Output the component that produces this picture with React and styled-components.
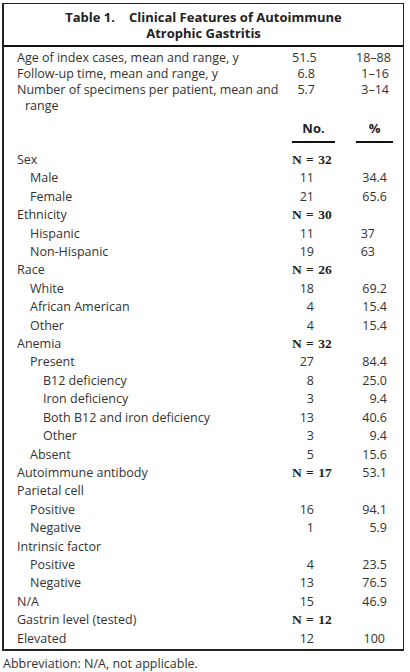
import React from "react";
import styled, { createGlobalStyle } from "styled-components";

const Global = createGlobalStyle`
  html, body { margin: 0; padding: 0; background: #fff; }
  body { font-family: "Open Sans", "Lato", sans-serif; color: #333; }
`;

const Page = styled.div`
  width: 410px;
  padding: 3px 0 0 2px;
  box-sizing: border-box;
`;

const Box = styled.div`
  width: 402px;
  box-sizing: border-box;
  border-top: 1px solid #222;
  border-right: 1px solid #222;
  border-left: 2px solid #222;
  border-bottom: 2px solid #222;
`;

const Title = styled.div`
  font-weight: 700;
  font-size: 13px;
  line-height: 16px;
  text-align: center;
  padding: 5px 0 4px;
  border-bottom: 2px solid #111;
  color: #222;
`;

const Gap = styled.span`
  display: inline-block;
  width: ${(p) => p.w}px;
`;

const Body = styled.div`
  padding: 3px 0 1px;
`;

const Row = styled.div`
  display: grid;
  grid-template-columns: 1fr 43px 21px 37px;
  padding: 0 10px 0 13px;
  font-size: 12.5px;
  line-height: ${(p) => (p.tight ? "16px" : "18.4px")};
`;

const Label = styled.div`
  padding-left: ${(p) => (p.level || 0) * 13}px;
  white-space: nowrap;
  min-width: 0;
`;

const Cont = styled.span`
  display: block;
  padding-left: 8px;
`;

const Num = styled.div`
  grid-column: 2;
  text-align: right;
  padding-right: ${(p) => (p.pr != null ? p.pr : 21)}px;
  white-space: nowrap;
`;

const Pct = styled.div`
  grid-column: 4;
  text-align: right;
  padding-right: ${(p) => (p.pr != null ? p.pr : 6)}px;
  white-space: nowrap;
`;

const NTotal = styled.div`
  grid-column: 2;
  font-family: "Liberation Serif", "Times New Roman", serif;
  font-weight: 700;
  font-size: 13.5px;
  word-spacing: 1px;
  white-space: nowrap;
  color: #222;
`;

const HeadCell = styled.div`
  grid-column: ${(p) => p.col};
  text-align: center;
  font-weight: 700;
  font-size: 13px;
  border-bottom: 2px solid #111;
  padding: 4px 0 5px;
  line-height: 16px;
  color: #222;
`;

const HeadRow = styled(Row)`
  margin-top: 2px;
  margin-bottom: 8px;
`;

const Foot = styled.div`
  font-size: 12.5px;
  line-height: 14px;
  padding: 6px 0 0 1px;
`;

const top = [
  { l: "Age of index cases, mean and range, y", a: "51.5", b: "18–88" },
  { l: "Follow-up time, mean and range, y", a: "6.8", b: "1–16" },
  {
    l: "Number of specimens per patient, mean and",
    cont: "range",
    a: "5.7",
    b: "3–14",
  },
];

const rows = [
  { l: "Sex", lv: 0, n: "N = 32" },
  { l: "Male", lv: 1, no: "11", p: "34.4" },
  { l: "Female", lv: 1, no: "21", p: "65.6" },
  { l: "Ethnicity", lv: 0, n: "N = 30" },
  { l: "Hispanic", lv: 1, no: "11", p: "37", pp: 18 },
  { l: "Non-Hispanic", lv: 1, no: "19", p: "63", pp: 18 },
  { l: "Race", lv: 0, n: "N = 26" },
  { l: "White", lv: 1, no: "18", p: "69.2" },
  { l: "African American", lv: 1, no: "4", p: "15.4" },
  { l: "Other", lv: 1, no: "4", p: "15.4" },
  { l: "Anemia", lv: 0, n: "N = 32" },
  { l: "Present", lv: 1, no: "27", p: "84.4" },
  { l: "B12 deficiency", lv: 2, no: "8", p: "25.0" },
  { l: "Iron deficiency", lv: 2, no: "3", p: "9.4" },
  { l: "Both B12 and iron deficiency", lv: 2, no: "13", p: "40.6" },
  { l: "Other", lv: 2, no: "3", p: "9.4" },
  { l: "Absent", lv: 1, no: "5", p: "15.6" },
  { l: "Autoimmune antibody", lv: 0, n: "N = 17", p: "53.1" },
  { l: "Parietal cell", lv: 0 },
  { l: "Positive", lv: 1, no: "16", p: "94.1" },
  { l: "Negative", lv: 1, no: "1", p: "5.9" },
  { l: "Intrinsic factor", lv: 0 },
  { l: "Positive", lv: 1, no: "4", p: "23.5" },
  { l: "Negative", lv: 1, no: "13", p: "76.5" },
  { l: "N/A", lv: 0, no: "15", p: "46.9" },
  { l: "Gastrin level (tested)", lv: 0, n: "N = 12" },
  { l: "Elevated", lv: 0, no: "12", p: "100", pp: 8 },
];

export default function App() {
  return (
    <Page>
      <Global />
      <Box>
        <Title>
          Table 1.<Gap w={14} />Clinical Features of Autoimmune
          <br />
          Atrophic Gastritis
        </Title>
        <Body>
          {top.map((r) => (
            <Row tight key={r.l}>
              <Label>
                {r.l}
                {r.cont && <Cont>{r.cont}</Cont>}
              </Label>
              <Num pr={20}>{r.a}</Num>
              <Pct pr={4}>{r.b}</Pct>
            </Row>
          ))}
          <HeadRow tight>
            <div />
            <HeadCell col={2}>No.</HeadCell>
            <HeadCell col={4}>%</HeadCell>
          </HeadRow>
          {rows.map((r, i) => (
            <Row key={i}>
              <Label level={r.lv}>{r.l}</Label>
              {r.n ? <NTotal>{r.n}</NTotal> : <Num>{r.no}</Num>}
              <Pct pr={r.pp}>{r.p}</Pct>
            </Row>
          ))}
        </Body>
      </Box>
      <Foot>Abbreviation: N/A, not applicable.</Foot>
    </Page>
  );
}
